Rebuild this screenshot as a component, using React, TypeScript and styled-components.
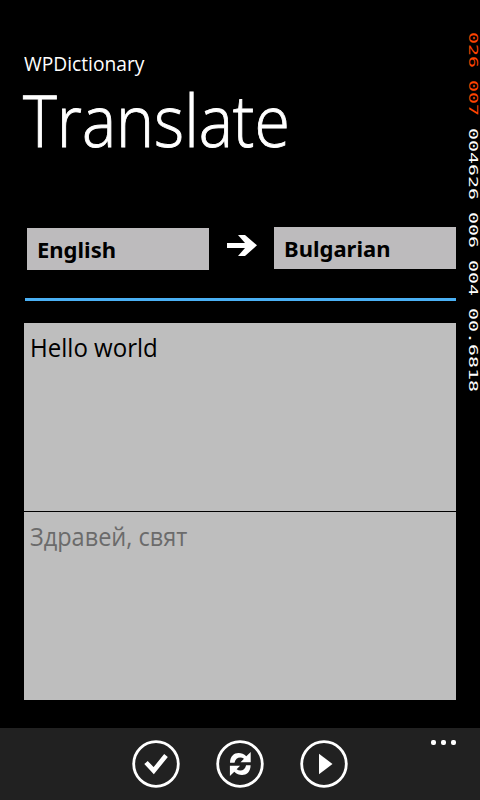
import React from "react";
import styled, { createGlobalStyle } from "styled-components";

const Global = createGlobalStyle`
  * { box-sizing: border-box; }
  html, body { margin: 0; background: #000; }
`;
const Screen = styled.div`
  position: relative;
  width: 480px;
  height: 800px;
  overflow: hidden;
  display: flex;
  flex-direction: column;
  background: #000;
  color: #fff;
  font-family: "Open Sans", "Noto Sans", sans-serif;
`;
const Header = styled.header`
  height: 227px;
  padding: 50px 0 0 24px;
`;
const AppName = styled.div`
  font-size: 20px;
  line-height: 28px;
  white-space: nowrap;
`;
const Fit = styled.span<{ $x: number }>`
  display: inline-block;
  transform: scaleX(${(p) => p.$x});
  transform-origin: left center;
`;
const Title = styled.h1`
  margin: 0 0 0 -1px;
  font-size: 71px;
  font-weight: 300;
  line-height: 84px;
  white-space: nowrap;
  -webkit-text-stroke: 0.9px #fff;
`;
const Languages = styled.div`
  display: flex;
  height: 70px;
  padding: 0 24px 0 27px;
  align-items: flex-start;
`;
const Language = styled.button<{ $drop?: number }>`
  width: 182px;
  height: 42px;
  margin: ${(p) => p.$drop ?? 0}px 0 0;
  padding: 0 10px;
  border: 0;
  background: #bdbbbd;
  color: #000;
  text-align: left;
  font: 700 22px/40px "Noto Sans", sans-serif;
`;
const Direction = styled.div`
  width: 65px;
  height: 36px;
  padding: 8px 0 0 18px;
  svg { display: block; }
`;
const Rule = styled.div`
  height: 3px;
  margin: 1px 24px 22px 25px;
  background: #4ab0f4;
`;
const Panel = styled.div<{ $muted?: boolean }>`
  height: 188px;
  margin: 0 24px 1px;
  padding: 7px 6px;
  background: #bebebe;
  color: ${(p) => (p.$muted ? "#6b6b6b" : "#000")};
  font-size: 25px;
  line-height: 34px;
  white-space: nowrap;
`;
const AppBar = styled.footer`
  position: relative;
  height: 72px;
  margin-top: auto;
  display: flex;
  justify-content: center;
  gap: 36px;
  padding-top: 12px;
  background: #212121;
`;
const RoundButton = styled.button`
  width: 48px;
  height: 48px;
  padding: 0;
  border: 0;
  background: none;
  color: #fff;
  svg { display: block; }
`;
const More = styled.div`
  position: absolute;
  right: 24px;
  top: 12px;
  display: flex;
  gap: 5px;
`;
const Dot = styled.i`
  width: 5px;
  height: 5px;
  border-radius: 2px;
  background: #fff;
`;
const Counters = styled.div`
  position: absolute;
  left: 467px;
  top: 32px;
  width: 13px;
  line-height: 13px;
  writing-mode: vertical-rl;
  white-space: pre;
  font-family: "DejaVu Sans Mono", monospace;
  font-size: 13px;
  transform: scaleY(1.533);
  transform-origin: left top;
`;
const Rate = styled.span`
  color: #ff4500;
`;

const Ring = () => <circle cx="24" cy="24" r="22.3" fill="none" stroke="currentColor" strokeWidth="2.8" />;

const turn = "M14 22.700C14 12 24.500 10.500 30.300 16.200L34.700 12V22.200H24.500L28 18.800C24.500 16 19.500 17.500 18.500 22.700Z";

export default function App() {
  return (
    <Screen>
      <Global />
      <Header>
        <AppName><Fit $x={0.96}>WPDictionary</Fit></AppName>
        <Title><Fit $x={0.908}>Translate</Fit></Title>
      </Header>
      <Languages>
        <Language $drop={1}>English</Language>
        <Direction>
          <svg width="32" height="22" viewBox="0 0 32 22">
            <path d="M0 8h18l-7-8h7l12 10.300L18 21h-7l7-8H0z" fill="#fff" />
          </svg>
        </Direction>
        <Language>Bulgarian</Language>
      </Languages>
      <Rule />
      <Panel><Fit $x={0.962}>Hello world</Fit></Panel>
      <Panel $muted><Fit $x={0.94}>Здравей, свят</Fit></Panel>
      <Counters><Rate>026 007 </Rate>004626 006 004 00.6818</Counters>
      <AppBar>
        <RoundButton aria-label="Accept">
          <svg width="48" height="48" viewBox="0 0 48 48">
            <Ring />
            <path d="M14 22.500l7.700 8.200L34 15.500" fill="none" stroke="currentColor" strokeWidth="4.700" />
          </svg>
        </RoundButton>
        <RoundButton aria-label="Swap">
          <svg width="48" height="48" viewBox="0 0 48 48">
            <Ring />
            <g fill="currentColor">
              <path d={turn} />
              <path d={turn} transform="rotate(180 24.3 24)" />
            </g>
          </svg>
        </RoundButton>
        <RoundButton aria-label="Play">
          <svg width="48" height="48" viewBox="0 0 48 48">
            <Ring />
            <path d="M19 13.700l13.500 10.300L19 34.300z" fill="currentColor" />
          </svg>
        </RoundButton>
        <More><Dot /><Dot /><Dot /></More>
      </AppBar>
    </Screen>
  );
}
